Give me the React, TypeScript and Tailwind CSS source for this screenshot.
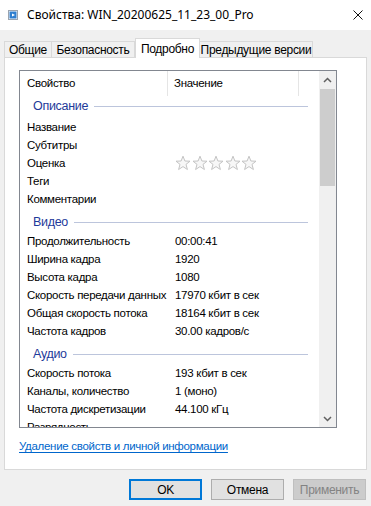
import React from "react";

const font = { fontFamily: '"Liberation Sans", Arial, sans-serif' };
const titleFont = { fontFamily: '"Noto Sans", "Liberation Sans", sans-serif' };

function Star() {
  return (
    <svg width="16" height="16" viewBox="0 0 16 16">
      <path
        d="M8 1.2 L9.9 6 L15 6.2 L11 9.4 L12.4 14.5 L8 11.6 L3.6 14.5 L5 9.4 L1 6.2 L6.1 6 Z"
        fill="#f7f7f7"
        stroke="#c4c4c4"
        strokeWidth="1"
        strokeLinejoin="round"
      />
    </svg>
  );
}

function Row({ label, value, stars }: { label: string; value?: string; stars?: boolean }) {
  return (
    <div className="flex h-[18px] shrink-0 items-center text-[11.5px] leading-[18px]">
      <div className="w-[155px] shrink-0 pl-[7px] whitespace-nowrap">{label}</div>
      <div className="flex items-center whitespace-nowrap">
        {stars ? (
          <div className="flex gap-[0.5px] tracking-normal">
            <Star />
            <Star />
            <Star />
            <Star />
            <Star />
          </div>
        ) : (
          value
        )}
      </div>
    </div>
  );
}

function Group({ title, first }: { title: string; first?: boolean }) {
  return (
    <div className={first ? "h-[22px] shrink-0 pt-[1px]" : "h-[24px] shrink-0 pt-[5px]"}>
      <div className="flex h-[18px] items-center pl-[13px] pr-[11px]">
        <span className="text-[#1e3a9a] leading-[18px] text-[12.5px]">{title}</span>
        <div className="ml-[6px] h-px flex-1 bg-[#bcc5dc]" />
      </div>
    </div>
  );
}

function Chevron({ up }: { up?: boolean }) {
  return (
    <svg width="9" height="6" viewBox="0 0 9 6">
      <path
        d={up ? "M1 5 L4.5 1.5 L8 5" : "M1 1 L4.5 4.5 L8 1"}
        fill="none"
        stroke="#606060"
        strokeWidth="1.5"
      />
    </svg>
  );
}

function FileIcon() {
  return (
    <svg width="10" height="10" viewBox="0 0 10 10">
      <rect x="0.5" y="0.5" width="9" height="9" fill="#ffffff" stroke="#9aa4b0" />
      <rect x="1.5" y="1.5" width="7" height="7" fill="#2f7fd0" />
      <path d="M4 3.5 L7 5 L4 6.5 Z" fill="#ffffff" />
    </svg>
  );
}

export default function App() {
  return (
    <div
      className="flex h-[506px] w-[371px] flex-col overflow-hidden bg-[#f0f0f0] text-[12px] tracking-[-0.3px] text-black"
      style={font}
    >
      {/* Title bar */}
      <div className="flex h-[30px] shrink-0 items-center bg-white">
        <div className="ml-[8px] mr-[9px] flex">
          <FileIcon />
        </div>
        <div className="text-[12px] leading-[16px] tracking-normal whitespace-nowrap" style={titleFont}>
          Свойства: WIN_20200625_11_23_00_Pro
        </div>
        <div className="ml-auto mr-[8px] flex">
          <svg width="10" height="10" viewBox="0 0 10 10">
            <path d="M0.5 0.5 L9.5 9.5 M9.5 0.5 L0.5 9.5" stroke="#111" strokeWidth="1" />
          </svg>
        </div>
      </div>

      {/* Tabs */}
      <div className="relative mt-[8px] flex h-[19px] shrink-0 items-end pl-[4px]">
        <div className="flex h-[16px] w-[48px] items-center justify-center border border-b-0 border-[#d9d9d9] bg-[#f0f0f0] leading-[14px] whitespace-nowrap">
          Общие
        </div>
        <div className="flex h-[16px] w-[83px] items-center justify-center border border-b-0 border-l-0 border-[#d9d9d9] bg-[#f0f0f0] leading-[14px] whitespace-nowrap">
          Безопасность
        </div>
        <div className="relative z-10 mb-[-1px] flex h-[20px] w-[65px] items-start justify-center border border-b-0 border-[#d9d9d9] bg-white pt-[2px] leading-[16px] whitespace-nowrap">
          Подробно
        </div>
        <div className="flex h-[16px] w-[113px] items-center justify-center border border-b-0 border-l-0 border-[#d9d9d9] bg-[#f0f0f0] leading-[14px] whitespace-nowrap">
          Предыдущие версии
        </div>
      </div>

      {/* Panel */}
      <div className="mx-[4px] flex h-[413px] shrink-0 flex-col border border-[#d9d9d9] bg-white">
        {/* List view */}
        <div className="ml-[14px] mt-[12px] flex h-[358px] w-[318px] shrink-0 border border-[#828790] bg-white">
          <div className="flex min-w-0 flex-1 flex-col overflow-hidden">
            {/* Header */}
            <div className="flex h-[25px] shrink-0 items-center text-[11.5px]">
              <div className="flex h-full w-[148px] items-center border-r border-[#e5e5e5] pl-[7px]">
                Свойство
              </div>
              <div className="flex h-full w-[131px] items-center border-r border-[#e5e5e5] pl-[6px]">
                Значение
              </div>
            </div>
            <Group title="Описание" first />
            <Row label="Название" />
            <Row label="Субтитры" />
            <Row label="Оценка" stars />
            <Row label="Теги" />
            <Row label="Комментарии" />
            <Group title="Видео" />
            <Row label="Продолжительность" value="00:00:41" />
            <Row label="Ширина кадра" value="1920" />
            <Row label="Высота кадра" value="1080" />
            <Row label="Скорость передачи данных" value="17970 кбит в сек" />
            <Row label="Общая скорость потока" value="18164 кбит в сек" />
            <Row label="Частота кадров" value="30.00 кадров/с" />
            <Group title="Аудио" />
            <Row label="Скорость потока" value="193 кбит в сек" />
            <Row label="Каналы, количество" value="1 (моно)" />
            <Row label="Частота дискретизации" value="44.100 кГц" />
            <Row label="Разрядность" value="" />
          </div>
          {/* Scrollbar */}
          <div className="flex w-[17px] shrink-0 flex-col bg-[#f0f0f0]">
            <div className="flex h-[17px] items-center justify-center">
              <Chevron up />
            </div>
            <div className="mx-[1px] mt-[1px] h-[97px] bg-[#cdcdcd]" />
            <div className="flex-1" />
            <div className="flex h-[17px] items-center justify-center">
              <Chevron />
            </div>
          </div>
        </div>

        <div className="ml-[14px] mt-[10px] leading-[16px]">
          <span className="text-[11.5px] text-[#0066cc] underline underline-offset-2">
            Удаление свойств и личной информации
          </span>
        </div>
      </div>

      {/* Buttons */}
      <div className="mt-[9px] flex justify-end gap-[9px] pr-[5px]">
        <div className="flex h-[21px] w-[73px] items-center justify-center border-2 border-[#0078d7] bg-[#e1e1e1]">
          OK
        </div>
        <div className="flex h-[21px] w-[73px] items-center justify-center border border-[#adadad] bg-[#e1e1e1]">
          Отмена
        </div>
        <div className="flex h-[21px] w-[73px] items-center justify-center border border-[#bfbfbf] bg-[#cccccc] text-[#838383]">
          Применить
        </div>
      </div>
    </div>
  );
}
